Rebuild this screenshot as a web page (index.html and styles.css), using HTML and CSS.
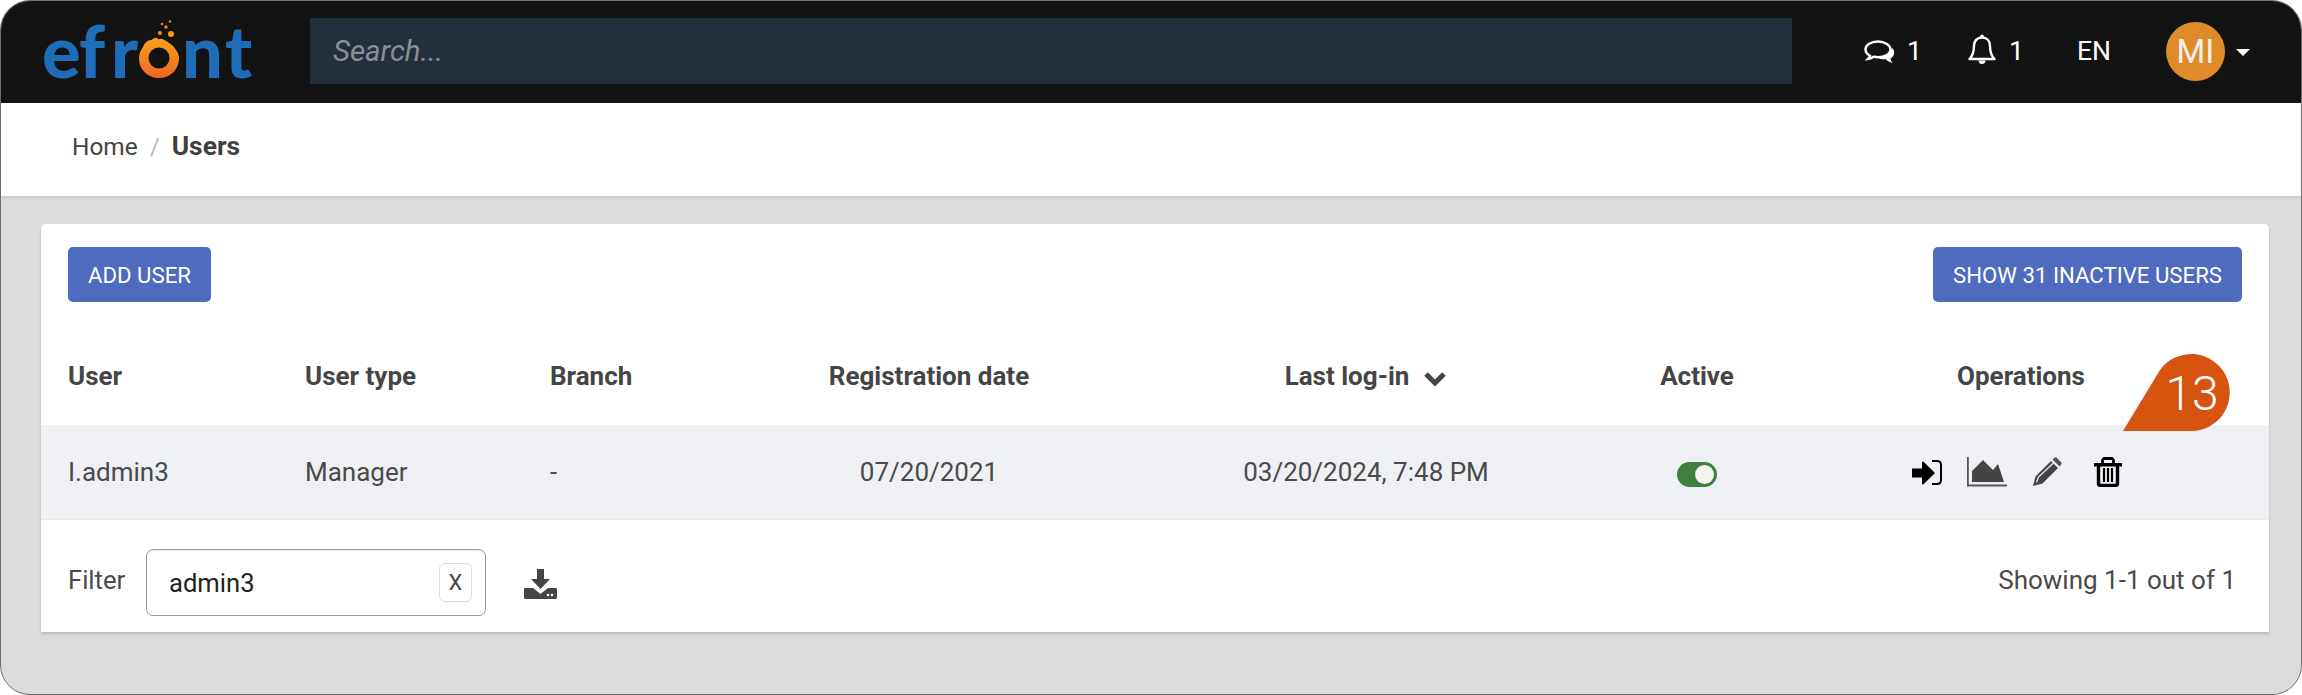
FILE: index.html
```html
<!DOCTYPE html>
<html lang="en">
<head>
<meta charset="utf-8">
<title>Users</title>
<link rel="stylesheet" href="styles.css">
</head>
<body>
<div class="frame">
  <header class="topbar">
    <svg class="logo" viewBox="0 0 230 70" width="230" height="70" aria-label="efront">
      <defs>
        <linearGradient id="ring" x1="0" y1="0" x2="0" y2="1">
          <stop offset="0" stop-color="#f9a11b"/>
          <stop offset="1" stop-color="#ee6524"/>
        </linearGradient>
      </defs>
      <text class="logo-text" x="-1 36 68">efr</text>
      <path fill="url(#ring)" d="M100 29c1-4 4-6 7-7 2 1 3-2 5-2 2-1 3 2 5 1 2-1 4 1 6 2 3 2 5 3 7 5 3 4 6 7 6 12 0 12-9 20-20 20s-20-8-20-20c0-5 2-8 4-11z"/>
      <circle cx="116" cy="40" r="10.500" fill="#131313"/>
      <circle cx="128" cy="16" r="3" fill="#f79a1f"/>
      <circle cx="117" cy="15" r="2.100" fill="#f08a26"/>
      <circle cx="123" cy="9" r="1.700" fill="#f08a26"/>
      <circle cx="119" cy="6" r="1.200" fill="#f08a26"/>
      <circle cx="127" cy="3.500" r="1.200" fill="#f08a26"/>
      <text class="logo-text" x="139 182">nt</text>
    </svg>
    <div class="search"><input class="search-input" type="text" placeholder="Search..."></div>
    <div class="top-item chat">
      <svg class="ic-chat" viewBox="0 0 31 24" width="31" height="24"><path d="M14 1.500C7 1.500 1.500 5 1.500 9.500c0 2.600 1.800 4.800 4.500 6.300-.3 1.200-1 2.300-2 3.200 2.300-.2 4.300-1 5.800-2.300 1.400.3 2.900.5 4.200.5 7 0 12.500-3.400 12.500-7.700S21 1.500 14 1.500z" fill="none" stroke="#fff" stroke-width="2.400"/><path d="M28 8c2 1.500 2.500 4 2 6-.5 2-2 3.500-3.500 4.500.2 1.500 1 3 2 4.500-3-.8-5-2-6.500-3.800-2.500.3-6 0-9-2 6 .5 13-1.500 15-9.200z" fill="#fff"/></svg>
      <span>1</span>
    </div>
    <div class="top-item bell">
      <svg class="ic-bell" viewBox="0 0 28 31" width="28" height="31"><path d="M14 3.500c-5 0-8 3.500-8 8.500 0 6-1 9.500-4.500 13h25c-3.500-3.500-4.500-7-4.500-13 0-5-3-8.500-8-8.500z" fill="none" stroke="#fff" stroke-width="2.400" stroke-linejoin="round"/><circle cx="14" cy="2.300" r="1.800" fill="#fff"/><path d="M10.500 26.500a3.500 3.500 0 0 0 7 0z" fill="#fff"/></svg>
      <span>1</span>
    </div>
    <div class="lang">EN</div>
    <div class="avatar">MI</div>
    <div class="caret"></div>
  </header>

  <nav class="crumbs">
    <span class="crumb">Home</span>
    <span class="crumb-sep">/</span>
    <span class="crumb-cur">Users</span>
  </nav>

  <main class="card">
    <div class="toolbar">
      <button class="btn">ADD USER</button>
      <button class="btn">SHOW 31 INACTIVE USERS</button>
    </div>
    <div class="row head">
      <div>User</div>
      <div>User type</div>
      <div>Branch</div>
      <div class="mid">Registration date</div>
      <div class="mid sort">Last log-in
        <svg class="chev" viewBox="0 0 24 15" width="24" height="15"><path d="M3 3l9 9 9-9" fill="none" stroke="#444" stroke-width="5"/></svg>
      </div>
      <div class="mid">Active</div>
      <div class="mid">Operations</div>
    </div>
    <div class="row body">
      <div>I.admin3</div>
      <div>Manager</div>
      <div>-</div>
      <div class="mid">07/20/2021</div>
      <div class="mid">03/20/2024, 7:48 PM</div>
      <div class="mid"><span class="toggle"><span class="knob"></span></span></div>
      <div class="ops">
        <svg viewBox="0 0 30 25" width="30" height="25"><path d="M0 8.500h10V2.500c0-1 1-1.300 1.800-.6L23 13 11.800 24c-.8.700-1.800.4-1.800-.6V17.500H0z" fill="#000"/><path d="M20 1h5c2.500 0 4 1.500 4 4v15c0 2.500-1.500 4-4 4h-5" fill="none" stroke="#000" stroke-width="2"/></svg>
        <svg viewBox="0 0 40 30" width="40" height="30"><path d="M5 25V14L16 3l10 10 5-6 6 18z" fill="#444"/><path d="M.8 0v28.500H40" fill="none" stroke="#555" stroke-width="2"/></svg>
        <svg viewBox="0 0 30 30" width="30" height="30"><path d="M1 29l2.500-9.500L19 4l7 7L10.500 26.500z" fill="#444"/><path d="M4.500 25.500l2-5.500 16-15" fill="none" stroke="#eef0f4" stroke-width="1.200"/><path d="M20.500 2.500L22.500.8c.8-.6 1.500-.6 2.200 0l4.500 4.500c.6.700.6 1.400 0 2.200L27.500 9.500z" fill="#555"/></svg>
        <svg class="ic-trash" viewBox="0 0 28 30" width="28" height="30"><path d="M0 6h28v3.500H0z" fill="#000"/><path d="M8.500 6.500V3.500c0-1 1-2 2-2h7c1 0 2 1 2 2v3" fill="none" stroke="#000" stroke-width="2.800"/><path d="M4.500 8v18c0 1.800 1 2.500 2.500 2.500h14c1.500 0 2.500-.7 2.500-2.500V8" fill="none" stroke="#000" stroke-width="3.400"/><path d="M10 11v14M14 11v14M18 11v14" stroke="#000" stroke-width="2.200"/></svg>
      </div>
    </div>
    <div class="foot">
      <label class="filter-label">Filter</label>
      <div class="filter-box">
        <input class="filter-input" type="text" value="admin3">
        <span class="clear">X</span>
      </div>
      <svg class="dl" viewBox="0 0 33 30" width="33" height="30"><path d="M13 0h7v10h6L16.500 20 7 10h6z" fill="#444"/><path d="M0 20.500c0-.8.700-1.500 1.500-1.500H9l7.500 6L24 19h7.500c.8 0 1.500.7 1.500 1.500v8c0 .8-.7 1.500-1.500 1.500h-30C.7 30 0 29.300 0 28.500z" fill="#444"/><circle cx="24" cy="26" r="1.300" fill="#fff"/><circle cx="28" cy="26" r="1.300" fill="#fff"/></svg>
      <div class="showing">Showing 1-1 out of 1</div>
    </div>
    <svg class="badge" viewBox="0 0 107 77" width="107" height="77">
      <path d="M0 77L37 16A38.500 38.500 0 1 1 68.500 77Z" fill="#d65310"/>
      <text class="badge-text" x="69" y="56">13</text>
    </svg>
  </main>
</div>
</body>
</html>
```
FILE: styles.css
```css
* { box-sizing: border-box; }
html, body { margin: 0; padding: 0; background: #fff; }
body { font-family: Roboto, "Liberation Sans", sans-serif; color: #4a4a4a; width: 2302px; height: 695px; overflow: hidden; }
.frame { width: 2302px; height: 695px; border: 1px solid #6e6e6e; border-radius: 30px; overflow: hidden; background: #dcdcdc; position: relative; }
.topbar { height: 102px; background: #131313; display: flex; align-items: center; color: #fff; font-size: 24px; }
.logo { margin-left: 42px; flex: none; overflow: visible; margin-top: 2px; }
.logo-text { font-family: Lato, sans-serif; font-weight: 900; font-size: 72px; fill: #1f6cb8; transform: translateY(60px); }
.search { margin-left: 37px; width: 1482px; height: 66px; background: #242f3c; flex: none; margin-bottom: 2px; }
.search-input { width: 100%; height: 100%; border: 0; background: transparent; padding: 0 23px; font: italic 29.4px Roboto, sans-serif; color: #ccc; outline: none; }
.search-input::placeholder { color: #8b8f94; opacity: 1; }
.top-item { display: flex; align-items: center; flex: none; font-size: 26.6px; }
.top-item span { line-height: 30px; margin-top: -3px; }
.ic-bell { margin-top: -5px; }
.chat { margin-left: 72px; gap: 12px; }
.bell { margin-left: 46px; gap: 13px; }
.lang { margin-left: 53px; font-size: 26.6px; width: 89px; margin-top: -4px; }
.avatar { width: 59px; height: 59px; border-radius: 50%; background: #e08b2a; color: #f3f0ea; font-size: 33px; display: flex; align-items: center; justify-content: center; flex: none; margin-top: -2px; }
.caret { margin-left: 11px; width: 0; height: 0; border-left: 7px solid transparent; border-right: 7px solid transparent; border-top: 7px solid #fff; }
.crumbs { height: 93px; background: #fff; box-shadow: 0 2px 3px rgba(0,0,0,.08); display: flex; align-items: center; padding: 0 0 7px 71px; font-size: 24.4px; position: relative; }
.crumb { color: #444; }
.crumb-sep { color: #bbb; margin: 0 12px; }
.crumb-cur { color: #3f3f3f; font-weight: 700; font-size: 26.4px; }
.card { position: relative; margin: 28px 32px 0 40px; height: 408px; background: #fff; border-radius: 5px 5px 0 0; box-shadow: 0 2px 3px rgba(120,130,170,.4); }
.toolbar { display: flex; justify-content: space-between; padding: 23px 27px 0; }
.btn { height: 55px; background: #4e6bbf; color: #fff; border: 0; border-radius: 5px; font: 22.2px Roboto, sans-serif; padding: 0 20px; }
.row { display: grid; grid-template-columns: 264px 245px 150px 458px 416px 246px 402px; padding: 0; font-size: 26px; line-height: 30px; }
.row > div:first-child { padding-left: 27px; }
.head { height: 123px; align-items: end; padding-bottom: 34px; font-weight: 700; color: #454545; }
.body { height: 95px; align-items: center; background: #eef0f4; border-bottom: 1px solid #e6e7ea; }
.mid { text-align: center; }
.sort { display: flex; justify-content: center; align-items: center; gap: 14px; }
.chev { margin-top: 4px; }
.toggle { display: inline-block; vertical-align: middle; width: 40px; height: 25px; border-radius: 13px; background: #3f7f3f; position: relative; }
.knob { position: absolute; right: 3px; top: 3px; width: 19px; height: 19px; border-radius: 50%; background: #f4f5f0; }
.ops { display: flex; justify-content: center; align-items: center; gap: 25px; padding-right: 8px; }
.ic-trash { margin-left: 7px; }
.foot { display: flex; align-items: center; height: 112px; padding: 29px 33px 16px 27px; font-size: 26px; }
.filter-label { width: 78px; margin-top: -5px; font-size: 25.6px; }
.filter-box { width: 340px; height: 67px; border: 1px solid #999; border-radius: 7px; display: flex; align-items: center; padding: 0 13px 0 22px; box-shadow: inset 0 1px 2px rgba(0,0,0,.08); }
.filter-input { flex: 1; min-width: 0; border: 0; outline: none; background: transparent; font: 25.6px Roboto, sans-serif; color: #222; padding: 0; }
.clear { width: 33px; height: 39px; border: 1px solid #ddd; border-radius: 6px; font-size: 22px; display: flex; align-items: center; justify-content: center; color: #444; }
.dl { margin-left: 38px; margin-top: 2px; }
.showing { margin-left: auto; margin-top: -5px; }
.badge { position: absolute; left: 2082px; top: 130px; }
.badge-text { font: 300 48px Roboto, sans-serif; fill: #fff; text-anchor: middle; }
```
